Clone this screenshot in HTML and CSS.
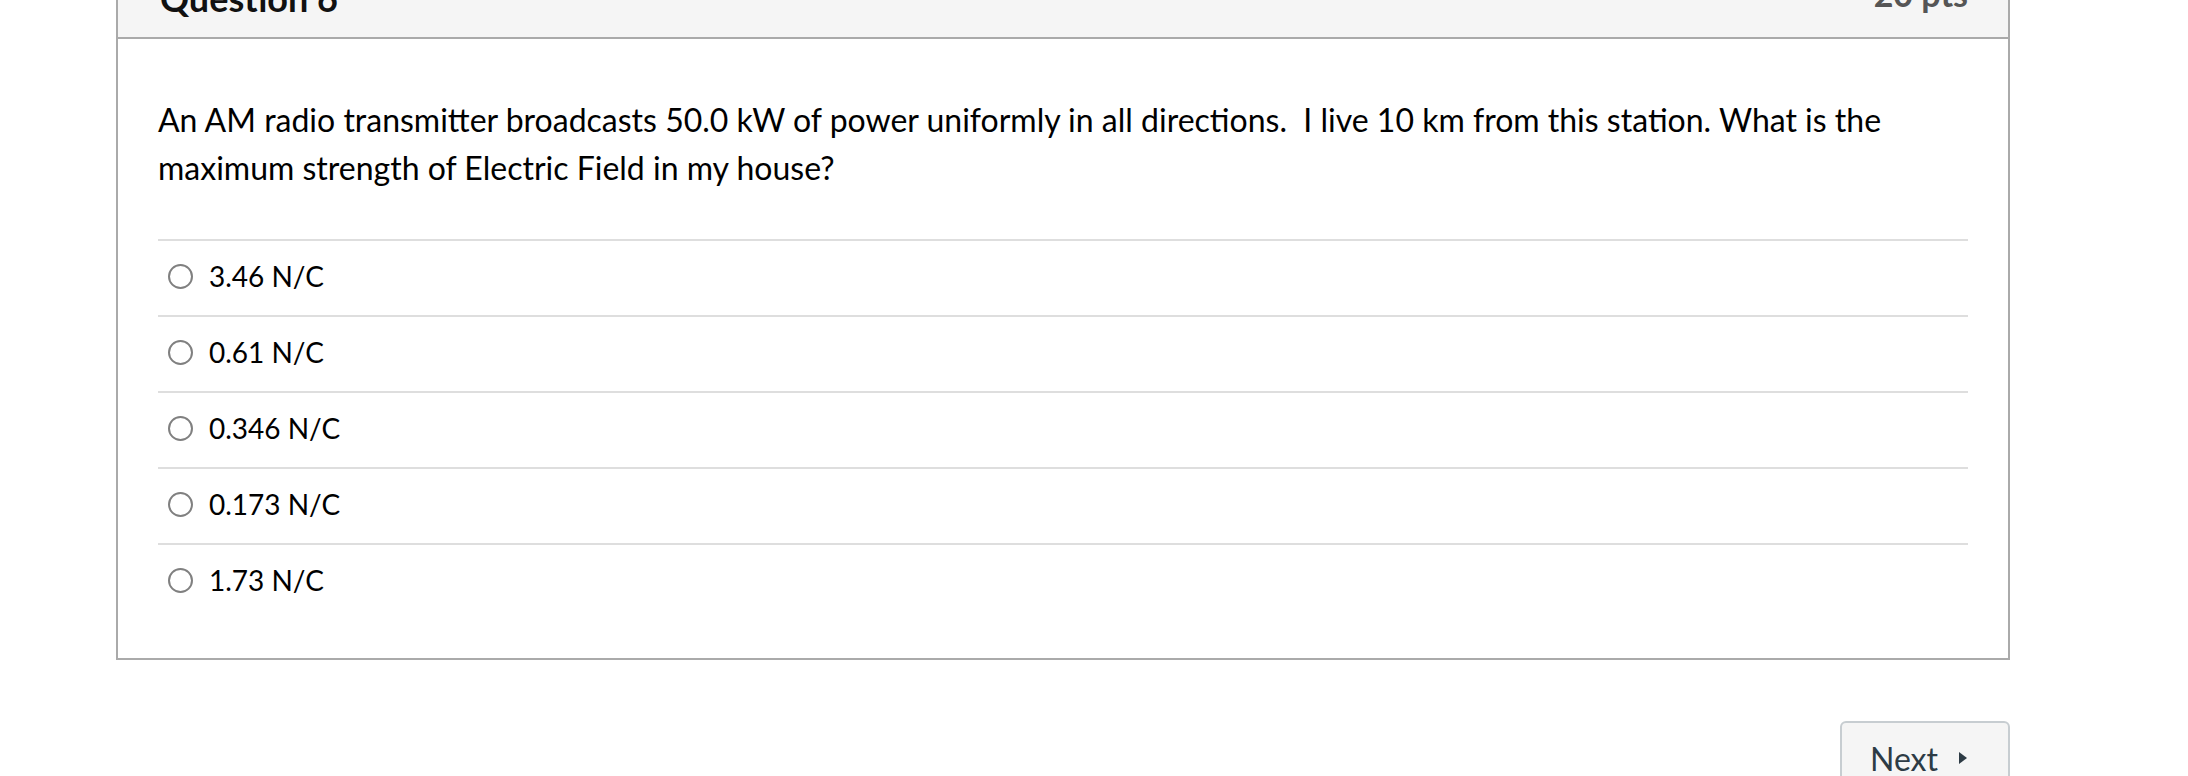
FILE: index.html
```html
<!DOCTYPE html>
<html lang="en">
<head>
<meta charset="UTF-8">
<title>Quiz</title>
<link rel="stylesheet" href="styles.css">
</head>
<body>
<div class="page">
  <div class="question">
    <div class="question-header">
      <span class="question-name">Question 6</span>
      <span class="question-points">20 pts</span>
    </div>
    <div class="question-body">
      <div class="question-text">An AM radio transmitter broadcasts 50.0 kW of power uniformly in all directions.&nbsp; I live 10 km from this station. What is the maximum strength of Electric Field in my house?</div>
      <div class="answers">
        <label class="answer"><input type="radio" name="q6"><span>3.46 N/C</span></label>
        <label class="answer"><input type="radio" name="q6"><span>0.61 N/C</span></label>
        <label class="answer"><input type="radio" name="q6"><span>0.346 N/C</span></label>
        <label class="answer"><input type="radio" name="q6"><span>0.173 N/C</span></label>
        <label class="answer"><input type="radio" name="q6"><span>1.73 N/C</span></label>
      </div>
    </div>
  </div>

  <div class="nav">
    <button class="next-btn">Next <svg class="next-icon" width="10" height="14" viewBox="0 0 10 14"><path d="M1 1 L9 7 L1 13 Z" fill="#2d3b45"/></svg></button>
  </div>
</div>
</body>
</html>
```

FILE: styles.css
```css
body {
  margin: 0;
  background: #fff;
  font-family: Lato, "Open Sans", sans-serif;
  color: #000;
}
.page {
  margin-left: 116px;
  width: 1894px;
}
.question {
  margin-top: -46px;
  border: 2px solid #aaa;
  background: #fff;
}
.question-header {
  display: flex;
  justify-content: space-between;
  align-items: flex-end;
  background: #f5f5f5;
  border-bottom: 2px solid #aaa;
  padding: 18px 40px 17px 42px;
}
.question-name {
  font-size: 36px;
  font-weight: 700;
  line-height: 1.2;
  color: #111;
}
.question-points {
  font-size: 34px;
  font-weight: 700;
  line-height: 1.2;
  color: #555;
  padding-bottom: 5px;
}
.question-body {
  padding: 57px 40px 39px 40px;
}
.question-text {
  font-size: 32px;
  line-height: 48px;
  margin-bottom: 47px;
}
.answers {
  display: flex;
  flex-direction: column;
}
.answer {
  display: flex;
  align-items: center;
  height: 71px;
  padding-bottom: 3px;
  border-top: 2px solid #dedede;
  font-size: 28px;
  cursor: pointer;
}
.answer input {
  appearance: none;
  -webkit-appearance: none;
  width: 25px;
  height: 25px;
  margin: 0 16px 0 10px;
  border: 2px solid #808080;
  border-radius: 50%;
  background: #fff;
  flex-shrink: 0;
}
.nav {
  display: flex;
  justify-content: flex-end;
  margin-top: 61px;
}
.next-btn {
  display: flex;
  align-items: center;
  gap: 20px;
  background: #f5f5f5;
  color: #2d3b45;
  border: 2px solid #c7cdd1;
  border-radius: 6px;
  padding: 16px 40px 16px 28px;
  font-family: Lato, "Open Sans", sans-serif;
  font-size: 32px;
  cursor: pointer;
}
```
